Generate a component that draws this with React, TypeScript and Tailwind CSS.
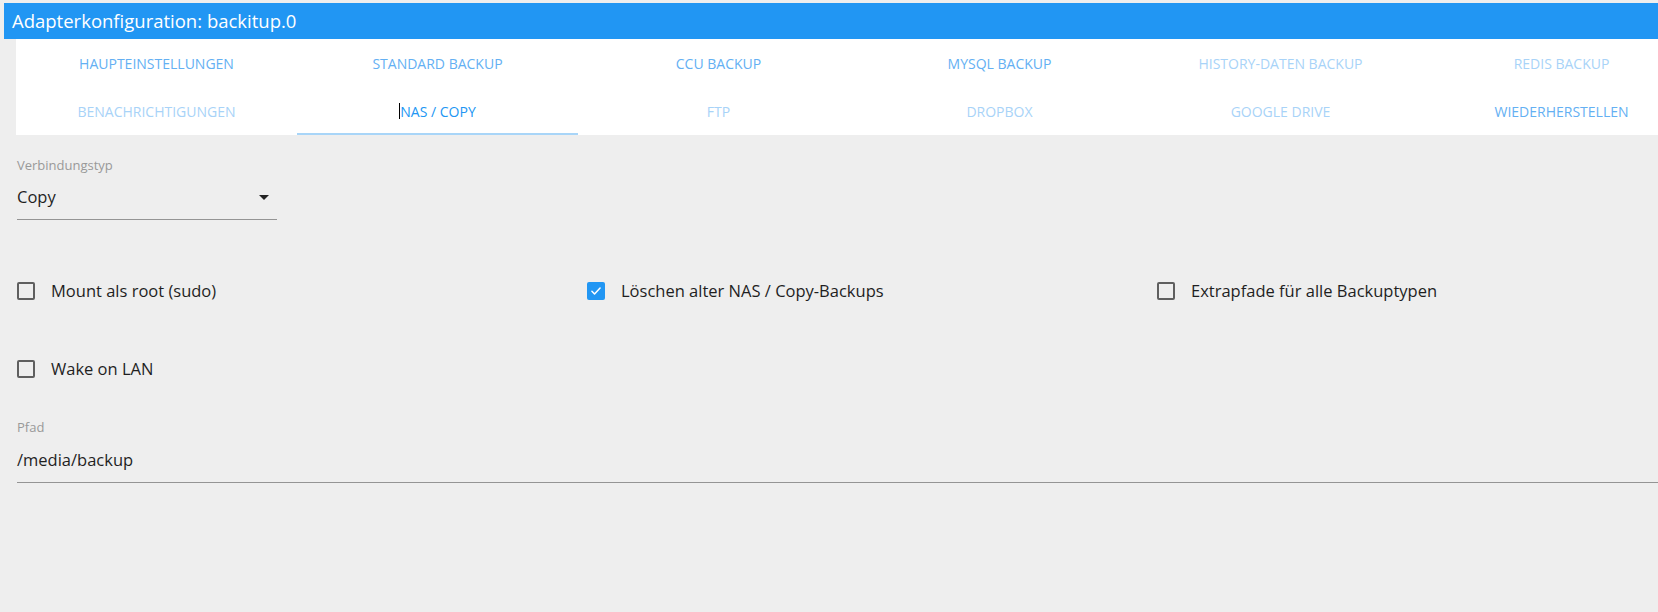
const tabs = [
  { label: "Haupteinstellungen", state: "on" },
  { label: "Standard Backup", state: "on" },
  { label: "CCU Backup", state: "on" },
  { label: "MySQL Backup", state: "on" },
  { label: "History-Daten Backup", state: "off" },
  { label: "Redis Backup", state: "off" },
  { label: "Benachrichtigungen", state: "off" },
  { label: "NAS / Copy", state: "selected" },
  { label: "FTP", state: "off" },
  { label: "Dropbox", state: "off" },
  { label: "Google Drive", state: "off" },
  { label: "Wiederherstellen", state: "on" },
];

const Checkbox = ({ label, checked }: { label: string; checked?: boolean }) => (
  <div className="flex items-center h-10 w-[570px]">
    {checked ? (
      <span className="w-[18px] h-[18px] rounded-[2px] bg-[#2196f3] flex items-center justify-center">
        <svg width="14" height="14" viewBox="0 0 24 24" fill="none">
          <path d="M5 12.5l4.5 4.5L19 7" stroke="white" strokeWidth="2.6" strokeLinecap="round" strokeLinejoin="round" />
        </svg>
      </span>
    ) : (
      <span className="w-[18px] h-[18px] rounded-[2px] border-2 border-[#5f5f5f]" />
    )}
    <span className="ml-4 text-[16.5px] text-[#1f1f1f]">{label}</span>
  </div>
);

export default function App() {
  return (
    <div className="h-screen bg-[#eeeeee] overflow-hidden" style={{ fontFamily: "'Open Sans', 'Noto Sans', sans-serif" }}>
      <div className="pt-[3px] pl-[4px]">
        <div className="h-9 bg-[#2196f3] text-white text-[18.5px] pl-2 flex items-center">
          Adapterkonfiguration: backitup.0
        </div>
      </div>

      <div className="pl-4 w-[1702px]">
        <div className="bg-white grid grid-cols-6">
          {tabs.map((t) => (
            <div
              key={t.label}
              className={
                "h-12 flex items-center justify-center uppercase text-[14px] font-medium relative " +
                (t.state === "selected"
                  ? "text-[#2196f3]"
                  : t.state === "on"
                  ? "text-[#64b0f3]"
                  : "text-[#a8d3f8]")
              }
            >
              {t.state === "selected" && <span className="w-px h-4 bg-black" />}
              {t.label}
              {t.state === "selected" && (
                <span className="absolute left-0 right-0 bottom-0 h-[2px] bg-[#a8d5f8]" />
              )}
            </div>
          ))}
        </div>
      </div>

      <div className="pl-[17px] w-[1730px]">
        <div className="mt-[22px] h-4 leading-4 text-[13px] text-[#999999]">Verbindungstyp</div>
        <div className="w-[260px] pt-3 pb-[10px] border-b border-[#949494] flex items-center justify-between">
          <span className="text-[16.5px] leading-6 text-[#1f1f1f]">Copy</span>
          <svg width="10" height="5" viewBox="0 0 10 5" className="mr-[8px]">
            <path d="M0 0h10L5 5z" fill="#222" />
          </svg>
        </div>

        <div className="mt-[51px] flex">
          <Checkbox label="Mount als root (sudo)" />
          <Checkbox label="Löschen alter NAS / Copy-Backups" checked />
          <Checkbox label="Extrapfade für alle Backuptypen" />
        </div>
        <div className="mt-[38px] flex">
          <Checkbox label="Wake on LAN" />
        </div>

        <div className="mt-[30px] h-4 leading-4 text-[13px] text-[#999999]">Pfad</div>
        <div className="pt-[13px] pb-[10px] border-b border-[#949494]">
          <span className="text-[16.5px] leading-6 text-[#1f1f1f]">/media/backup</span>
        </div>
      </div>
    </div>
  );
}
